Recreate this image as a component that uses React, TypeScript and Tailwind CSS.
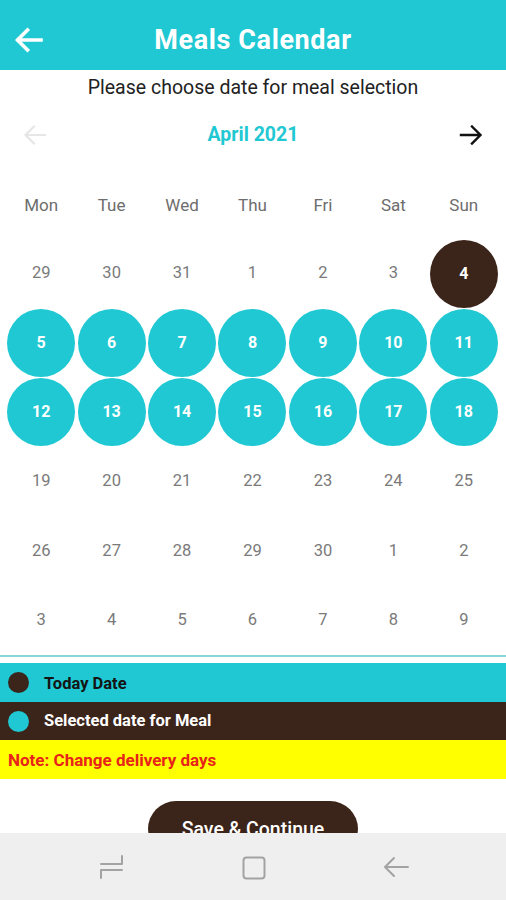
import React from "react";

type Cell = { d: number; kind: "plain" | "today" | "sel" };

const rows: Cell[][] = [
  [29, 30, 31, 1, 2, 3].map((d) => ({ d, kind: "plain" as const })).concat([{ d: 4, kind: "today" }]),
  [5, 6, 7, 8, 9, 10, 11].map((d) => ({ d, kind: "sel" as const })),
  [12, 13, 14, 15, 16, 17, 18].map((d) => ({ d, kind: "sel" as const })),
  [19, 20, 21, 22, 23, 24, 25].map((d) => ({ d, kind: "plain" as const })),
  [26, 27, 28, 29, 30, 1, 2].map((d) => ({ d, kind: "plain" as const })),
  [3, 4, 5, 6, 7, 8, 9].map((d) => ({ d, kind: "plain" as const })),
];

const days = ["Mon", "Tue", "Wed", "Thu", "Fri", "Sat", "Sun"];

function Arrow({ color, dir, width = 2.6 }: { color: string; dir: "left" | "right"; width?: number }) {
  return (
    <svg width="26" height="24" viewBox="0 0 26 24" fill="none">
      {dir === "left" ? (
        <path d="M23 12H4M12 3.5L3.5 12L12 20.5" stroke={color} strokeWidth={width} strokeLinecap="square" strokeLinejoin="miter" />
      ) : (
        <path d="M3 12H22M14 3.5L22.5 12L14 20.5" stroke={color} strokeWidth={width} strokeLinecap="square" strokeLinejoin="miter" />
      )}
    </svg>
  );
}

export default function App() {
  return (
    <div className="relative w-[506px] h-[900px] overflow-hidden bg-white" style={{ fontFamily: "Roboto, 'Noto Sans', sans-serif" }}>
      {/* Header */}
      <div className="relative h-[70px] bg-[#1fc8d2] flex items-center justify-center">
        <div className="absolute left-[14px] top-[27px]">
          <svg width="29" height="26" viewBox="0 0 29 26" fill="none">
            <path d="M27 13H4M13.5 3L3.5 13L13.5 23" stroke="white" strokeWidth="3.6" strokeLinecap="square" />
          </svg>
        </div>
        <span className="text-white font-bold text-[27px] leading-none tracking-[0.6px] pt-[11px]">Meals Calendar</span>
      </div>

      {/* Subtitle */}
      <div className="h-[34px] flex items-center justify-center">
        <span className="text-[19.5px] text-[#222] leading-none pt-[1px]">Please choose date for meal selection</span>
      </div>

      {/* Month row */}
      <div className="h-[62px] flex items-center justify-between px-[22px]">
        <Arrow color="#e6e6e6" dir="left" width={2.2} />
        <span className="text-[19.5px] font-bold text-[#1fc8d2] leading-none">April 2021</span>
        <Arrow color="#111" dir="right" width={2.4} />
      </div>

      {/* Weekdays */}
      <div className="h-[73px] grid grid-cols-7 pl-[6px] pr-[7px] items-center">
        {days.map((d) => (
          <div key={d} className="text-center text-[17px] text-[#6d6d6d] leading-none pt-[6px]">
            {d}
          </div>
        ))}
      </div>

      {/* Grid */}
      <div className="pl-[6px] pr-[7px]">
        {rows.map((r, i) => (
          <div key={i} className="grid grid-cols-7 h-[69.4px]">
            {r.map((c, j) => (
              <div key={j} className="flex items-center justify-center">
                {c.kind === "plain" ? (
                  <span className="text-[16.5px] text-[#7a7a7a]">{c.d}</span>
                ) : (
                  <div
                    className={
                      "w-[68px] h-[68px] rounded-full flex items-center justify-center text-white text-[16px] font-bold " +
                      (c.kind === "sel" ? "bg-[#1fc8d2]" : "bg-[#3b2419]")
                    }
                  >
                    {c.d}
                  </div>
                )}
              </div>
            ))}
          </div>
        ))}
      </div>

      {/* Divider */}
      <div className="h-[2px] bg-[#86d6da]" />
      <div className="h-[6px]" />

      {/* Legend */}
      <div className="h-[39px] bg-[#1fc8d2] flex items-center gap-[15px] px-[8px]">
        <div className="w-[21px] h-[21px] rounded-full bg-[#3b2419]" />
        <span className="text-[16.5px] font-bold text-[#141414] pt-[3px]">Today Date</span>
      </div>
      <div className="h-[38px] bg-[#3b2419] flex items-center gap-[15px] px-[8px]">
        <div className="w-[21px] h-[21px] rounded-full bg-[#1fc8d2]" />
        <span className="text-[16.5px] font-bold text-white pt-[1px]">Selected date for Meal</span>
      </div>
      <div className="h-[39px] bg-[#ffff00] flex items-center px-[8px]">
        <span className="text-[17px] font-bold text-[#e8231a] pt-[1px]">Note: Change delivery days</span>
      </div>

      {/* Button */}
      <div className="flex justify-center pt-[22px]">
        <button className="w-[210px] h-[56px] rounded-full bg-[#3b2419] text-white text-[19.5px] font-medium">
          Save &amp; Continue
        </button>
      </div>

      {/* System nav bar */}
      <div className="absolute left-0 right-0 bottom-0 h-[67px] bg-[#efefef]">
        <div className="absolute left-[99px] top-[22px]">
          <svg width="26" height="26" viewBox="0 0 26 26" fill="none">
            <path d="M23 1V9H2M23 15H2V23" stroke="#a3a3a3" strokeWidth="2" strokeLinecap="round" strokeLinejoin="round" />
          </svg>
        </div>
        <div className="absolute left-[242px] top-[23px]">
          <svg width="24" height="24" viewBox="0 0 24 24" fill="none">
            <rect x="1.5" y="1.5" width="21" height="21" rx="3" stroke="#a3a3a3" strokeWidth="2" />
          </svg>
        </div>
        <div className="absolute left-[383px] top-[23px]">
          <svg width="26" height="24" viewBox="0 0 26 24" fill="none">
            <path d="M25 11H3M11 2L2 11L11 20" stroke="#a3a3a3" strokeWidth="2" strokeLinecap="round" strokeLinejoin="round" />
          </svg>
        </div>
      </div>
    </div>
  );
}
